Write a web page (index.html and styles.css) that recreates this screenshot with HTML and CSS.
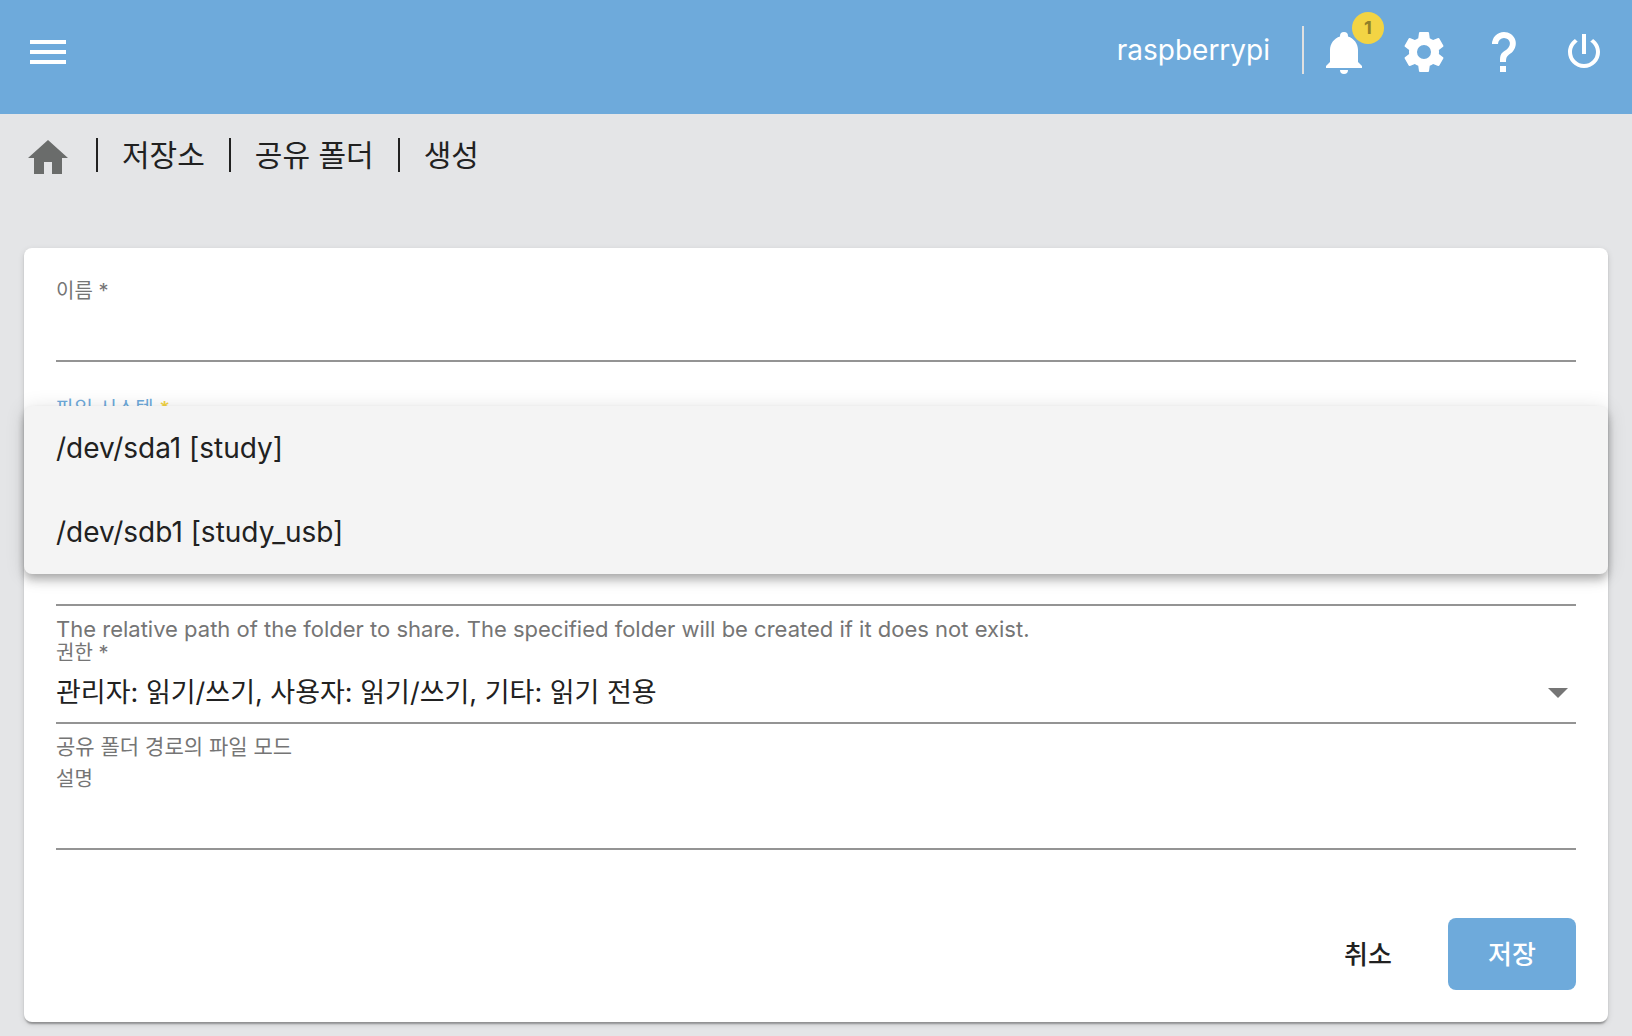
FILE: index.html
```html
<!DOCTYPE html>
<html lang="ko">
<head>
<meta charset="utf-8">
<meta name="viewport" content="width=device-width, initial-scale=1">
<title>공유 폴더 생성</title>
<link rel="stylesheet" href="styles.css">
</head>
<body>
<header class="toolbar">
  <button class="icon-button" type="button" aria-label="메뉴">
    <svg class="icon" viewBox="0 0 24 24" aria-hidden="true"><path d="M3,6H21V8H3V6M3,11H21V13H3V11M3,16H21V18H3V16Z"/></svg>
  </button>
  <div class="toolbar-end">
    <span class="hostname">raspberrypi</span>
    <span class="toolbar-divider"></span>
    <div class="toolbar-actions">
      <button class="icon-button" type="button" aria-label="알림">
        <svg class="icon" viewBox="0 0 24 24" aria-hidden="true"><path d="M21,19V20H3V19L5,17V11C5,7.9 7.03,5.17 10,4.29C10,4.19 10,4.1 10,4A2,2 0 0,1 12,2A2,2 0 0,1 14,4C14,4.1 14,4.19 14,4.29C16.97,5.17 19,7.9 19,11V17L21,19M14,21A2,2 0 0,1 12,23A2,2 0 0,1 10,21"/></svg>
        <span class="badge">1</span>
      </button>
      <button class="icon-button" type="button" aria-label="설정">
        <svg class="icon" viewBox="0 0 24 24" aria-hidden="true"><path d="M12,15.5A3.5,3.5 0 0,1 8.5,12A3.5,3.5 0 0,1 12,8.5A3.5,3.5 0 0,1 15.5,12A3.5,3.5 0 0,1 12,15.5M19.43,12.97C19.47,12.65 19.5,12.33 19.5,12C19.5,11.67 19.47,11.34 19.43,11L21.54,9.37C21.73,9.22 21.78,8.95 21.66,8.73L19.66,5.27C19.54,5.05 19.27,4.96 19.05,5.05L16.56,6.05C16.04,5.66 15.5,5.32 14.87,5.07L14.5,2.42C14.46,2.18 14.25,2 14,2H10C9.75,2 9.54,2.18 9.5,2.42L9.13,5.07C8.5,5.32 7.96,5.66 7.44,6.05L4.95,5.05C4.73,4.96 4.46,5.05 4.34,5.27L2.34,8.73C2.21,8.95 2.27,9.22 2.46,9.37L4.57,11C4.53,11.34 4.5,11.67 4.5,12C4.5,12.33 4.53,12.65 4.57,12.97L2.46,14.63C2.27,14.78 2.21,15.05 2.34,15.27L4.34,18.73C4.46,18.95 4.73,19.03 4.95,18.95L7.44,17.94C7.96,18.34 8.5,18.68 9.13,18.93L9.5,21.58C9.54,21.82 9.75,22 10,22H14C14.25,22 14.46,21.82 14.5,21.58L14.87,18.93C15.5,18.67 16.04,18.34 16.56,17.94L19.05,18.95C19.27,19.03 19.54,18.95 19.66,18.73L21.66,15.27C21.78,15.05 21.73,14.78 21.54,14.63L19.43,12.97Z"/></svg>
      </button>
      <button class="icon-button" type="button" aria-label="도움말">
        <svg class="icon" viewBox="0 0 24 24" aria-hidden="true"><path d="M10,19H13V22H10V19M12,2C17.35,2.22 19.68,7.62 16.5,11.67C15.67,12.67 14.33,13.33 13.67,14.17C13,15 13,16 13,17H10C10,15.33 10,13.92 10.67,12.92C11.33,11.92 12.67,11.33 13.5,10.67C15.92,8.43 15.32,5.26 12,5A3,3 0 0,0 9,8H6A6,6 0 0,1 12,2Z"/></svg>
      </button>
      <button class="icon-button" type="button" aria-label="전원">
        <svg class="icon" viewBox="0 0 24 24" aria-hidden="true"><path d="M16.56,5.44L15.11,6.89C16.84,7.94 18,9.83 18,12A6,6 0 0,1 12,18A6,6 0 0,1 6,12C6,9.83 7.16,7.94 8.88,6.88L7.44,5.44C5.36,6.88 4,9.28 4,12A8,8 0 0,0 12,20A8,8 0 0,0 20,12C20,9.28 18.64,6.88 16.56,5.44M13,3H11V13H13"/></svg>
      </button>
    </div>
  </div>
</header>

<nav class="breadcrumb" aria-label="경로">
  <a class="crumb-home" href="#" aria-label="홈">
    <svg class="icon" viewBox="0 0 24 24" aria-hidden="true"><path d="M10,20V14H14V20H19V12H22L12,3L2,12H5V20H10Z"/></svg>
  </a>
  <a class="crumb" href="#">저장소</a>
  <a class="crumb" href="#">공유 폴더</a>
  <a class="crumb" href="#" aria-current="page">생성</a>
</nav>

<main class="content">
  <form class="card">
    <div class="field">
      <label class="field-label" for="name">이름 *</label>
      <input class="field-control" id="name" type="text">
      <div class="field-support field-support-compact"></div>
    </div>

    <div class="field">
      <label class="field-label field-label-active" for="filesystem">파일 시스템 <span class="required">*</span></label>
      <select class="field-control" id="filesystem"></select>
      <div class="field-support"></div>
      <div class="select-panel" role="listbox" aria-label="파일 시스템">
        <button class="select-option" type="button" role="option" aria-selected="false">/dev/sda1 [study]</button>
        <button class="select-option" type="button" role="option" aria-selected="false">/dev/sdb1 [study_usb]</button>
      </div>
    </div>

    <div class="field">
      <div class="field-label"></div>
      <input class="field-control" type="text" aria-label="상대 경로" aria-describedby="path-hint">
      <div class="field-support field-support-compact" id="path-hint" lang="en">The relative path of the folder to share. The specified folder will be created if it does not exist.</div>
    </div>

    <div class="field">
      <label class="field-label" for="permissions">권한 *</label>
      <div class="select-wrap">
        <select class="field-control" id="permissions" aria-describedby="permissions-hint">
          <option>관리자: 읽기/쓰기, 사용자: 읽기/쓰기, 기타: 읽기 전용</option>
        </select>
        <svg class="select-arrow" viewBox="0 0 20 10" aria-hidden="true"><path d="M0,0H20L10,10Z"/></svg>
      </div>
      <div class="field-support" id="permissions-hint">공유 폴더 경로의 파일 모드</div>
    </div>

    <div class="field">
      <label class="field-label" for="comment">설명</label>
      <input class="field-control" id="comment" type="text">
      <div class="field-support"></div>
    </div>

    <div class="actions">
      <button class="button" type="button">취소</button>
      <button class="button button-primary" type="submit">저장</button>
    </div>
  </form>
</main>
</body>
</html>
```
FILE: styles.css
```css
* {
  box-sizing: border-box;
}

body {
  margin: 0;
  min-height: 100vh;
  background: #e4e5e7;
  color: #212121;
  font-family: Inter, "Noto Sans CJK KR", sans-serif;
  font-size: 28px;
}

button,
input,
select {
  margin: 0;
  padding: 0;
  border: 0;
  background: none;
  color: inherit;
  font: inherit;
}

a {
  color: inherit;
  text-decoration: none;
}

.icon {
  display: block;
  width: 48px;
  height: 48px;
  fill: currentColor;
}

/* Toolbar */

.toolbar {
  display: flex;
  align-items: flex-start;
  justify-content: space-between;
  height: 114px;
  padding: 26px 24px 0;
  background: #6eaadb;
  color: #fff;
}

.toolbar-end {
  display: flex;
  align-items: flex-start;
}

.hostname {
  margin-right: 32px;
  line-height: 48px;
}

.toolbar-divider {
  width: 2px;
  height: 48px;
  margin-right: 16px;
  background: #e0e0e0;
}

.toolbar-actions {
  display: flex;
  gap: 32px;
}

.icon-button {
  position: relative;
  padding-top: 2px;
  cursor: pointer;
}

.badge {
  position: absolute;
  top: -14px;
  right: -16px;
  width: 32px;
  height: 32px;
  border-radius: 50%;
  background: #f3d444;
  color: #918029;
  font-size: 18px;
  font-weight: 700;
  line-height: 31px;
  text-align: center;
}

/* Breadcrumb */

.breadcrumb {
  display: flex;
  align-items: center;
  gap: 24px;
  padding: 14px 24px 0;
  font-size: 30px;
}

.crumb-home {
  padding-top: 6px;
  color: #6a6c6b;
}

.crumb {
  display: flex;
  align-items: center;
  gap: 24px;
  line-height: 48px;
}

.crumb::before {
  content: "";
  width: 2px;
  height: 34px;
  background: currentColor;
}

/* Form */

.content {
  padding: 66px 24px 14px;
}

.card {
  padding: 28px 32px 32px;
  border-radius: 8px;
  background: #fff;
  box-shadow:
    0 4px 2px -2px rgba(0, 0, 0, 0.2),
    0 2px 2px rgba(0, 0, 0, 0.14),
    0 2px 6px rgba(0, 0, 0, 0.12);
}

.field {
  position: relative;
}

.field-label {
  display: block;
  height: 28px;
  color: #757575;
  font-size: 20px;
  line-height: 30px;
}

.field-label-active {
  color: #6eaadb;
}

.required {
  color: #f3d444;
  font-weight: 600;
}

.field-control {
  display: block;
  width: 100%;
  height: 58px;
  padding-bottom: 4px;
  border-bottom: 2px solid #949494;
  border-radius: 0;
  outline: 0;
  appearance: none;
  font-size: 27px;
}

.field-support {
  height: 40px;
  padding-top: 8px;
  color: #757575;
  font-size: 21px;
  line-height: 30px;
}

.field-support:lang(en) {
  font-size: 22px;
}

.field-support-compact {
  height: 32px;
}

.select-wrap {
  position: relative;
}

.select-arrow {
  position: absolute;
  top: 22px;
  right: 8px;
  width: 20px;
  height: 10px;
  fill: #757575;
  pointer-events: none;
}

.select-panel {
  position: absolute;
  z-index: 1;
  top: 12px;
  right: -32px;
  left: -32px;
  overflow: hidden;
  border-radius: 8px;
  background: #f4f4f4;
  box-shadow:
    0 4px 8px -2px rgba(0, 0, 0, 0.2),
    0 8px 10px rgba(0, 0, 0, 0.14),
    0 2px 20px rgba(0, 0, 0, 0.12);
}

.select-option {
  display: block;
  width: 100%;
  height: 84px;
  padding: 0 32px;
  text-align: left;
}

.actions {
  display: flex;
  justify-content: flex-end;
  gap: 16px;
  padding-top: 28px;
}

.button {
  min-width: 128px;
  height: 72px;
  padding-bottom: 4px;
  border-radius: 8px;
  font-size: 26px;
  font-weight: 500;
  cursor: pointer;
}

.button-primary {
  background: #6eaadb;
  color: #fff;
}
```
